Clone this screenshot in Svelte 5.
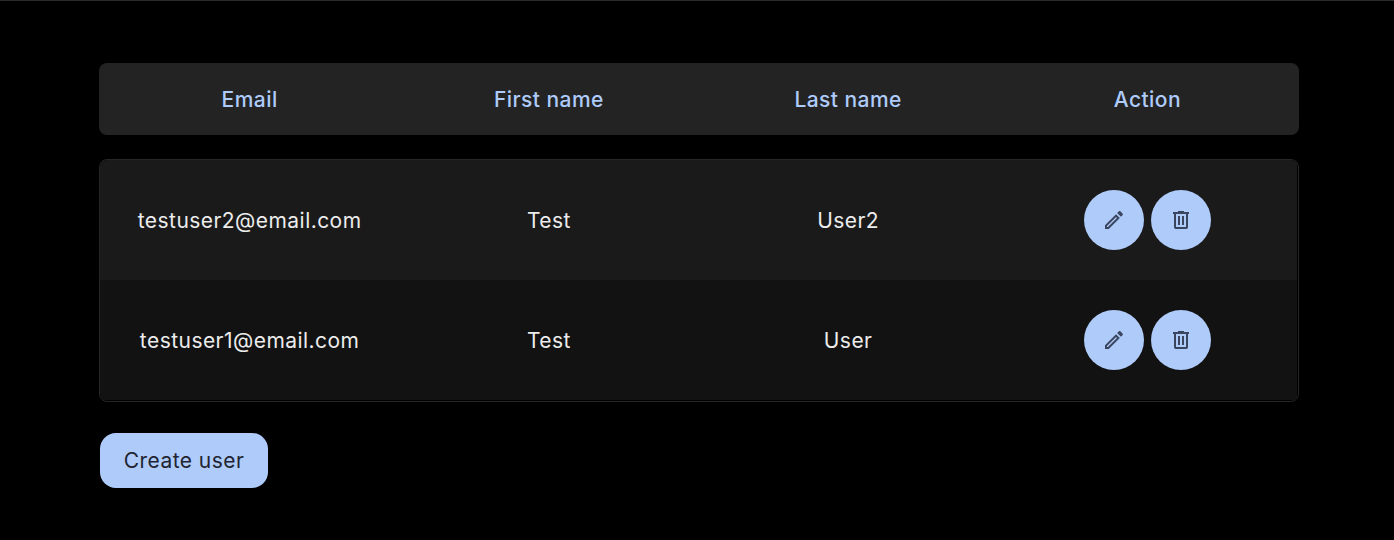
<script lang="ts">
    const users = [
        { email: "testuser2@email.com", first: "Test", last: "User2" },
        { email: "testuser1@email.com", first: "Test", last: "User" },
    ];
</script>

<div class="page">
    <div class="container">
        <div class="table-head">
            <span>Email</span>
            <span>First name</span>
            <span>Last name</span>
            <span>Action</span>
        </div>
        <div class="table-body">
            {#each users as user (user.email)}
                <div class="row">
                    <span>{user.email}</span>
                    <span>{user.first}</span>
                    <span>{user.last}</span>
                    <div class="actions">
                        <button class="icon-btn" aria-label="Edit">
                            <svg width="24" height="24" viewBox="0 0 24 24" fill="currentColor">
                                <path d="M3 17.25V21h3.75L17.81 9.94l-3.75-3.75L3 17.25zM5.92 19H5v-.92l9.06-9.06.92.92L5.92 19zM20.71 5.63l-2.34-2.34c-.2-.2-.45-.29-.71-.29s-.51.1-.7.29l-1.83 1.83 3.75 3.75 1.83-1.83c.39-.39.39-1.02 0-1.41z" />
                            </svg>
                        </button>
                        <button class="icon-btn" aria-label="Delete">
                            <svg width="24" height="24" viewBox="0 0 24 24" fill="currentColor">
                                <path d="M7 21q-.825 0-1.412-.587Q5 19.825 5 19V6H4V4h5V3h6v1h5v2h-1v13q0 .825-.587 1.413Q17.825 21 17 21ZM17 6H7v13h10ZM9 17h2V8H9Zm4 0h2V8h-2Z" />
                            </svg>
                        </button>
                    </div>
                </div>
            {/each}
        </div>
        <button class="create-btn">Create user</button>
    </div>
</div>

<style>
    :global(body) {
        margin: 0;
        background: #000;
    }

    .page {
        min-height: 540px;
        box-sizing: border-box;
        background: #000;
        border-top: 1px solid #2b2b2b;
        padding-top: 62px;
        font-family: Inter, "Noto Sans", sans-serif;
    }

    .container {
        width: 1200px;
        margin-left: 99px;
    }

    .table-head {
        display: grid;
        grid-template-columns: repeat(4, 1fr);
        align-items: center;
        height: 72px;
        padding: 0 2px 0 1px;
        background: #232323;
        border-radius: 8px;
        color: #aecbfa;
        font-size: 21px;
        font-weight: 500;
        letter-spacing: 0.45px;
        text-align: center;
    }

    .table-body {
        margin-top: 24px;
        padding: 0 1px 1px 0;
        border: 1px solid #262626;
        border-radius: 8px;
        overflow: hidden;
        background: #000;
    }

    .row {
        display: grid;
        grid-template-columns: repeat(4, 1fr);
        align-items: center;
        height: 120px;
        color: #ececec;
        font-size: 21px;
        letter-spacing: 0.45px;
        text-align: center;
        background: #121212;
    }

    .row:first-child {
        background: #1a1a1a;
    }

    .actions {
        display: flex;
        justify-content: center;
        gap: 7px;
    }

    .icon-btn {
        width: 60px;
        height: 60px;
        padding: 0;
        border: none;
        border-radius: 50%;
        display: flex;
        align-items: center;
        justify-content: center;
        background: #aecbfa;
        color: #3a4660;
    }

    .create-btn {
        display: block;
        margin: 31px 0 0 1px;
        width: 168px;
        height: 55px;
        padding: 0;
        border: none;
        border-radius: 16px;
        background: #aecbfa;
        color: #1f2430;
        font-family: inherit;
        font-size: 21px;
        letter-spacing: 0.45px;
    }
</style>
